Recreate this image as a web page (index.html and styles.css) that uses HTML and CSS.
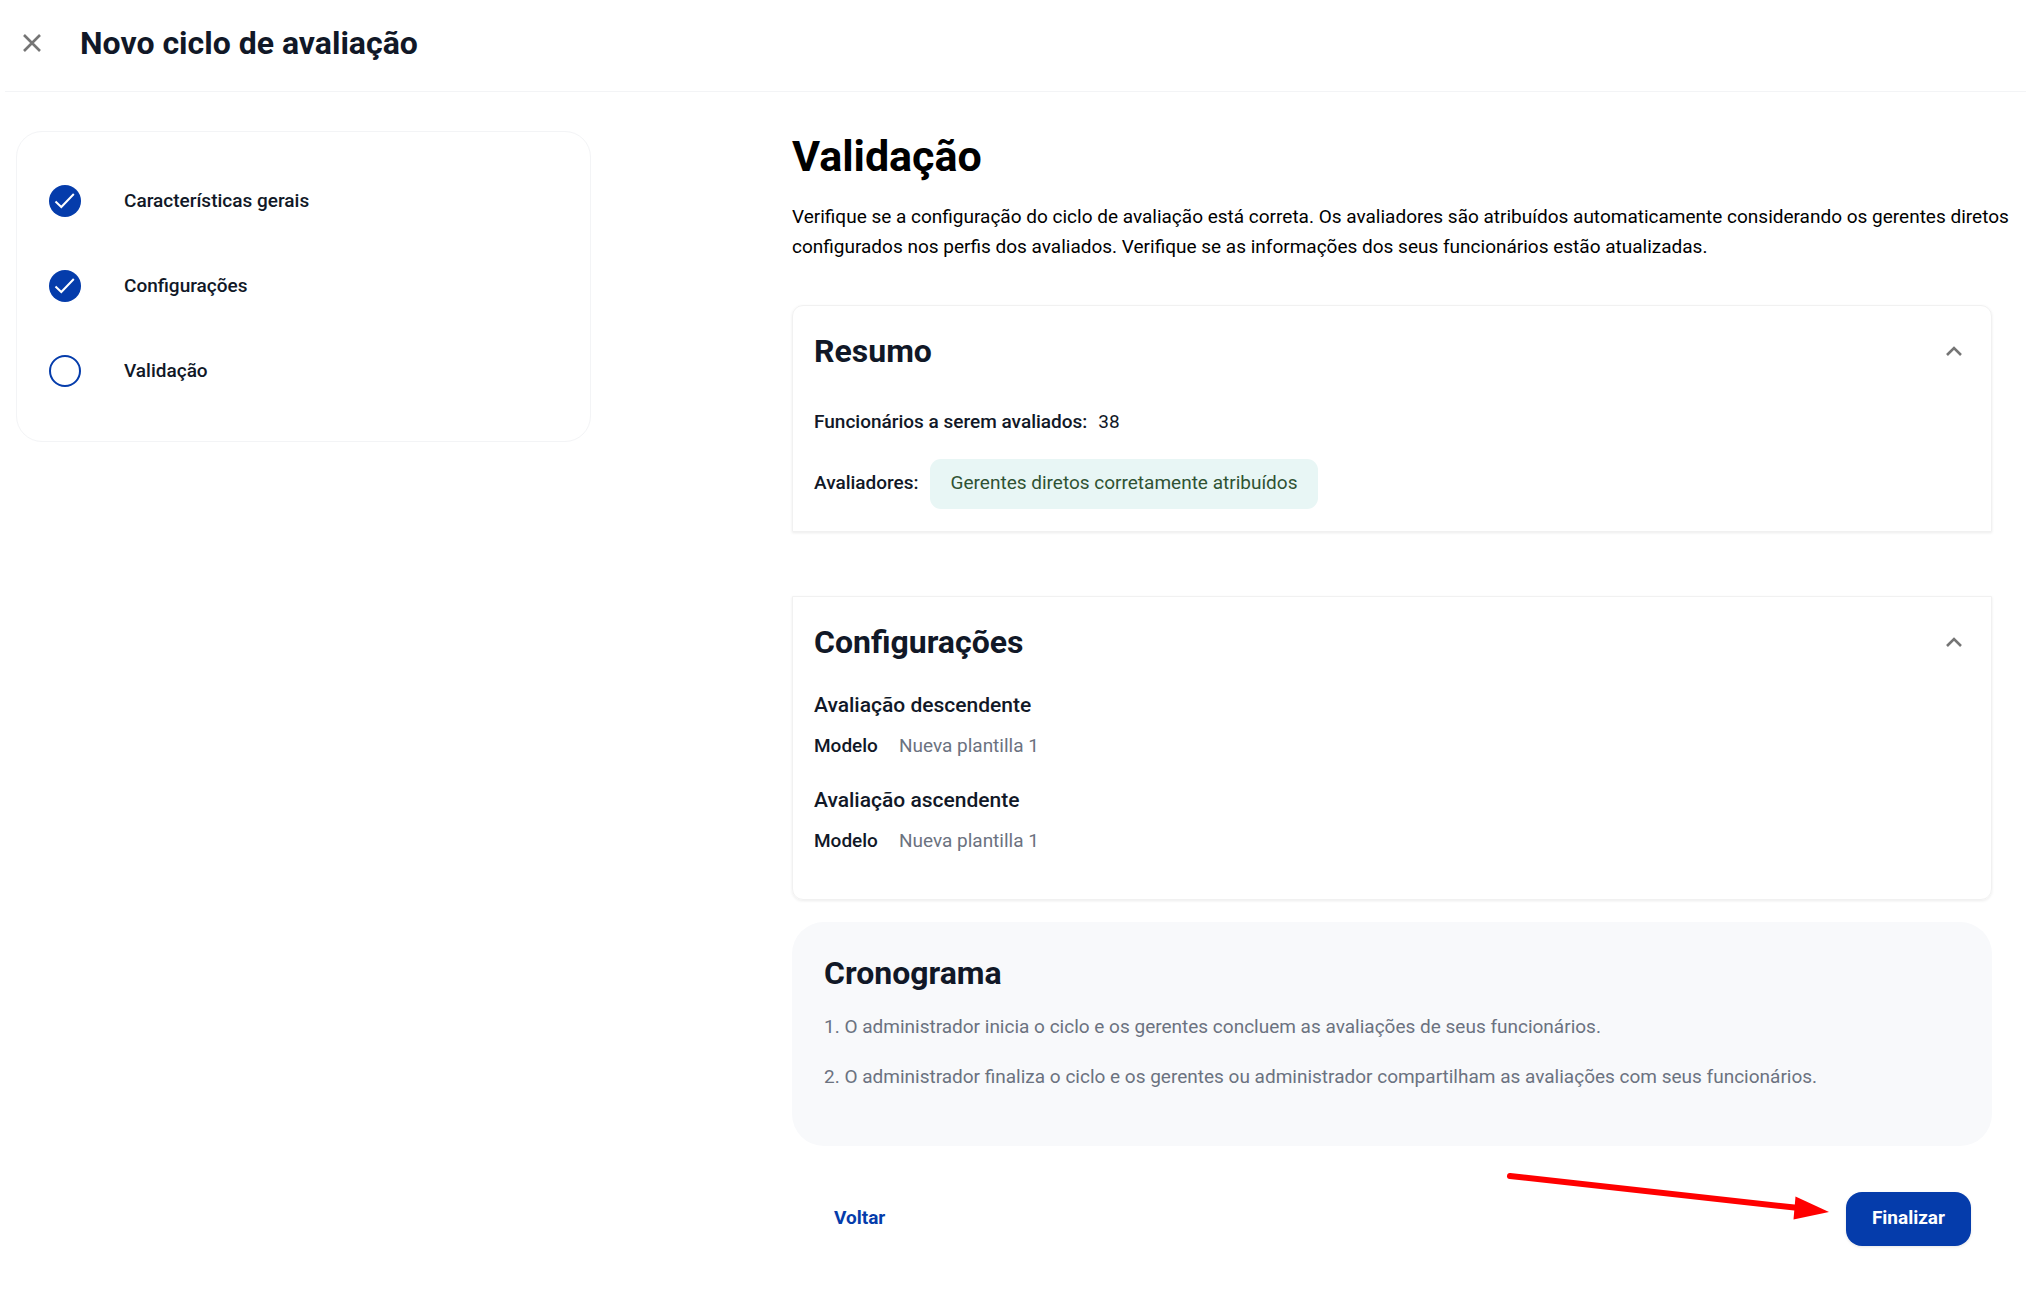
FILE: index.html
```
<!DOCTYPE html>
<html lang="pt-BR">
<head>
    <meta charset="UTF-8">
    <meta name="viewport" content="width=device-width, initial-scale=1.0">
    <title>Novo ciclo de avaliação</title>
    <link rel="stylesheet" href="styles.css">
</head>
<body>
    <header class="topbar">
        <button class="icon-btn" type="button" aria-label="Fechar">
            <svg width="18" height="18" viewBox="0 0 18 18"><path d="M1 1L17 17M17 1L1 17" fill="none" stroke="#757575" stroke-width="2.6"/></svg>
        </button>
        <h2 class="title">Novo ciclo de avaliação</h2>
    </header>

    <main class="page">
        <ol class="steps">
            <li class="step">
                <svg class="step-icon" viewBox="0 0 32 32"><circle cx="16" cy="16" r="16" fill="#053cab"/><path d="M6.5 16.5L12.3 22L24.8 9" fill="none" stroke="#fff" stroke-width="2"/></svg>
                <span>Características gerais</span>
            </li>
            <li class="step">
                <svg class="step-icon" viewBox="0 0 32 32"><circle cx="16" cy="16" r="16" fill="#053cab"/><path d="M6.5 16.5L12.3 22L24.8 9" fill="none" stroke="#fff" stroke-width="2"/></svg>
                <span>Configurações</span>
            </li>
            <li class="step">
                <svg class="step-icon" viewBox="0 0 32 32"><circle cx="16" cy="16" r="15" fill="none" stroke="#053cab" stroke-width="2"/></svg>
                <span>Validação</span>
            </li>
        </ol>

        <section class="content">
            <h1 class="heading">Validação</h1>
            <p class="intro">Verifique se a configuração do ciclo de avaliação está correta. Os avaliadores são atribuídos automaticamente considerando os gerentes diretos configurados nos perfis dos avaliados. Verifique se as informações dos seus funcionários estão atualizadas.</p>

            <div class="card card-first">
                <div class="card-head">
                    <h2 class="title">Resumo</h2>
                    <button class="icon-btn" type="button" aria-label="Recolher resumo">
                        <svg width="16" height="10" viewBox="0 0 16 10"><path d="M1 9L8 2L15 9" fill="none" stroke="#757575" stroke-width="2.6"/></svg>
                    </button>
                </div>
                <div class="summary">
                    <p class="row"><strong>Funcionários a serem avaliados:</strong><span>38</span></p>
                    <p class="row"><strong>Avaliadores:</strong><span class="tag">Gerentes diretos corretamente atribuídos</span></p>
                </div>
            </div>

            <div class="card card-last">
                <div class="card-head">
                    <h2 class="title">Configurações</h2>
                    <button class="icon-btn" type="button" aria-label="Recolher configurações">
                        <svg width="16" height="10" viewBox="0 0 16 10"><path d="M1 9L8 2L15 9" fill="none" stroke="#757575" stroke-width="2.6"/></svg>
                    </button>
                </div>
                <div class="reviews">
                    <div>
                        <h3 class="subtitle">Avaliação descendente</h3>
                        <p class="model"><strong>Modelo</strong><span>Nueva plantilla 1</span></p>
                    </div>
                    <div>
                        <h3 class="subtitle">Avaliação ascendente</h3>
                        <p class="model"><strong>Modelo</strong><span>Nueva plantilla 1</span></p>
                    </div>
                </div>
            </div>

            <div class="schedule">
                <h2 class="title">Cronograma</h2>
                <p>1. O administrador inicia o ciclo e os gerentes concluem as avaliações de seus funcionários.</p>
                <p>2. O administrador finaliza o ciclo e os gerentes ou administrador compartilham as avaliações com seus funcionários.</p>
            </div>

            <div class="actions">
                <button class="btn btn-text" type="button">Voltar</button>
                <button class="btn btn-main" type="button">Finalizar</button>
                <svg class="arrow" width="324" height="50" viewBox="0 0 324 50">
                    <path d="M5 6L294 38" stroke="#f00" stroke-width="6" stroke-linecap="round"/>
                    <path d="M290.500 26.500L324 42L288.500 49.500Z" fill="#f00"/>
                </svg>
            </div>
        </section>
    </main>
</body>
</html>
```
FILE: styles.css
```
*{
    box-sizing: border-box;
}
body{
    margin: 0;
    background-color: #fff;
    color: #111827;
    font-family: Roboto, "Liberation Sans", sans-serif;
    font-size: 19px;
    line-height: 30px;
}
h1, h2, h3, p, ol{
    margin: 0;
    padding: 0;
}
strong{
    font-weight: 500;
}
button{
    font-family: inherit;
    cursor: pointer;
}
.title{
    font-size: 32px;
    line-height: 38px;
    font-weight: 700;
}
.icon-btn{
    display: flex;
    padding: 0;
    border: none;
    background: none;
}

.topbar{
    display: flex;
    align-items: center;
    gap: 39px;
    margin-left: 5px;
    padding: 24px 18px 29px;
    border-bottom: 1px solid #f3f4f6;
}

.page{
    display: grid;
    grid-template-columns: 23fr 48fr;
    column-gap: 201px;
    align-items: start;
    padding: 39px 34px 50px 16px;
}

.steps{
    display: flex;
    flex-direction: column;
    gap: 53px;
    padding: 53px 32px 54px;
    border: 1px solid #f3f4f6;
    border-radius: 26px;
    list-style: none;
    font-weight: 500;
}
.step{
    display: flex;
    align-items: center;
    gap: 43px;
}
.step-icon{
    width: 32px;
    height: 32px;
}

.heading{
    color: #000;
    font-size: 43px;
    line-height: 50px;
    font-weight: 700;
}
.intro{
    margin: 21px -20px 43px 0;
    color: #000;
}

.card{
    padding: 26px 21px 22px;
    border: 1px solid #f1f1f1;
    box-shadow: 0 1px 3px #ececec;
}
.card-first{
    border-radius: 11px 11px 0 0;
}
.card-last{
    margin-top: 64px;
    padding-bottom: 43px;
    border-radius: 0 0 11px 11px;
}
.card-head{
    display: flex;
    align-items: center;
    justify-content: space-between;
    padding-right: 8px;
}
.summary{
    display: flex;
    flex-direction: column;
    gap: 22px;
    margin-top: 37px;
}
.row{
    display: flex;
    align-items: baseline;
    gap: 11px;
}
.tag{
    padding: 9px 21px 11px;
    border-radius: 11px;
    background-color: #e8f6f5;
    color: #2f5233;
}
.reviews{
    display: flex;
    flex-direction: column;
    gap: 24px;
    margin-top: 29px;
}
.subtitle{
    margin-bottom: 11px;
    font-size: 21px;
    font-weight: 500;
}
.model{
    display: flex;
    gap: 21px;
}
.model span{
    color: #6b7280;
}

.schedule{
    display: flex;
    flex-direction: column;
    gap: 20px;
    margin-top: 22px;
    padding: 32px 32px 54px;
    border-radius: 32px;
    background-color: #f8f9fb;
}
.schedule p{
    color: #6b7280;
}

.actions{
    position: relative;
    display: flex;
    align-items: center;
    justify-content: space-between;
    margin-top: 46px;
    padding: 0 21px;
}
.btn{
    padding: 11px 26px 13px;
    border: none;
    border-radius: 16px;
    font-size: 19px;
    line-height: 30px;
    font-weight: 700;
}
.btn-text{
    padding: 11px 21px 13px;
    background: none;
    color: #053cab;
}
.btn-main{
    background-color: #053cab;
    color: #fff;
    box-shadow: 0 1px 3px rgba(0, 0, 0, 0.1);
}
/* pointer to the finish button */
.arrow{
    position: absolute;
    right: 163px;
    top: -22px;
    pointer-events: none;
}
```
